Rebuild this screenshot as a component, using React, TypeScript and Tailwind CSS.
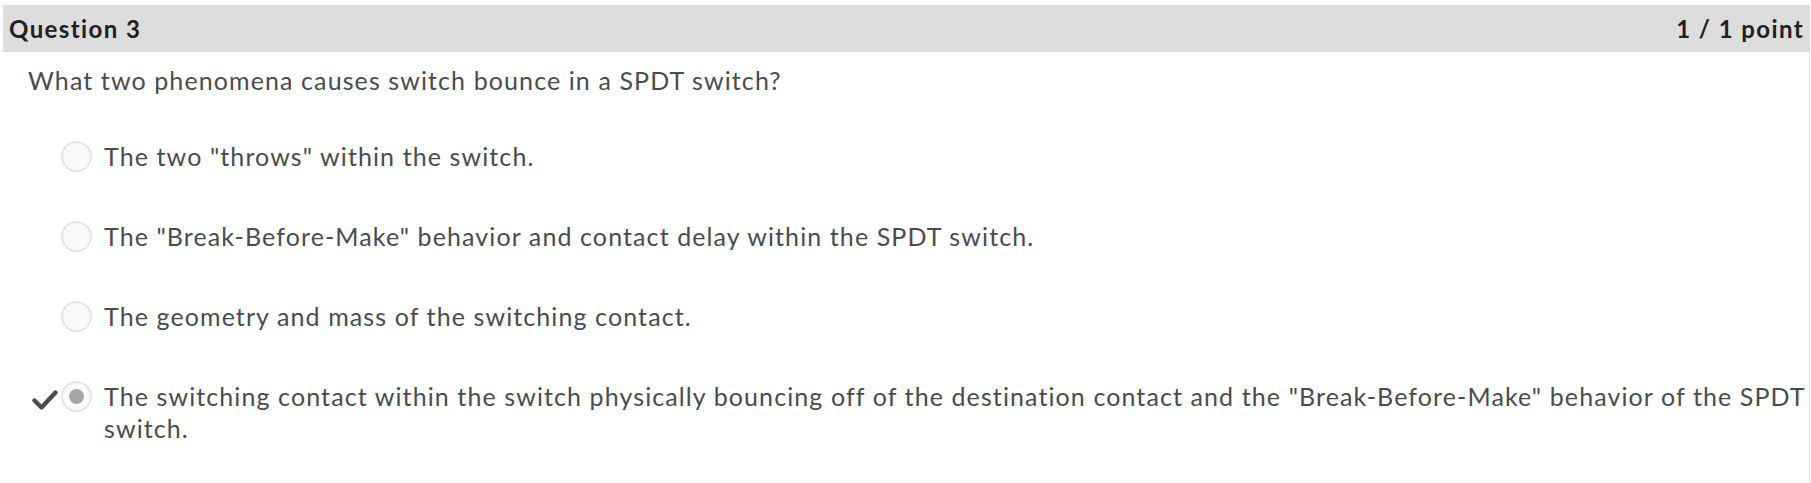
import React from "react";

const options = [
  { text: 'The two "throws" within the switch.', picked: false },
  { text: 'The "Break-Before-Make" behavior and contact delay within the SPDT switch.', picked: false },
  { text: "The geometry and mass of the switching contact.", picked: false },
  {
    text: 'The switching contact within the switch physically bouncing off of the destination contact and the "Break-Before-Make" behavior of the SPDT switch.',
    picked: true,
  },
];

const Check = () => (
  <svg width="26" height="22" viewBox="0 0 26 22" className="block">
    <path d="M2.5 11.5 L9.5 18.5 L23.5 3.5" fill="none" stroke="#494c4e" strokeWidth="4.4" strokeLinecap="round" strokeLinejoin="round" />
  </svg>
);

const Radio = ({ picked }: { picked: boolean }) => (
  <div className="w-[31px] h-[31px] shrink-0 rounded-full border-2 border-[#e3e6ea] bg-[#f9fafb] flex items-center justify-center">
    {picked && <div className="w-[15px] h-[15px] rounded-full bg-[#a6a6a6]" />}
  </div>
);

export default function App() {
  return (
    <div className="w-[1811px] h-[483px] bg-white pt-[5px] pl-[3px] pr-[1px] font-['Lato','Noto_Sans',sans-serif]">
      <div className="h-[47px] bg-[#dddddd] flex items-center justify-between pl-[6px] pr-[6px] text-[24px] tracking-[1.4px] font-bold text-[#202122]">
        <span>Question 3</span>
        <span>1 / 1 point</span>
      </div>
      <div className="border-r border-[#e6e6e6] h-[431px] pl-[25px] text-[#494c4e] text-[25px] tracking-[1.1px]">
        <div className="pt-[10px] leading-[36px]">What two phenomena causes switch bounce in a SPDT switch?</div>
        <div className="mt-[42px] flex flex-col gap-[48px]">
          {options.map((o, i) => (
            <div key={i} className="flex items-start">
              <div className="w-[33px] shrink-0 pt-[9px] pl-[4px]">{o.picked && <Check />}</div>
              <div className="pt-[1px]">
                <Radio picked={o.picked} />
              </div>
              <div className="ml-[12px] leading-[32px]">{o.text}</div>
            </div>
          ))}
        </div>
      </div>
    </div>
  );
}
